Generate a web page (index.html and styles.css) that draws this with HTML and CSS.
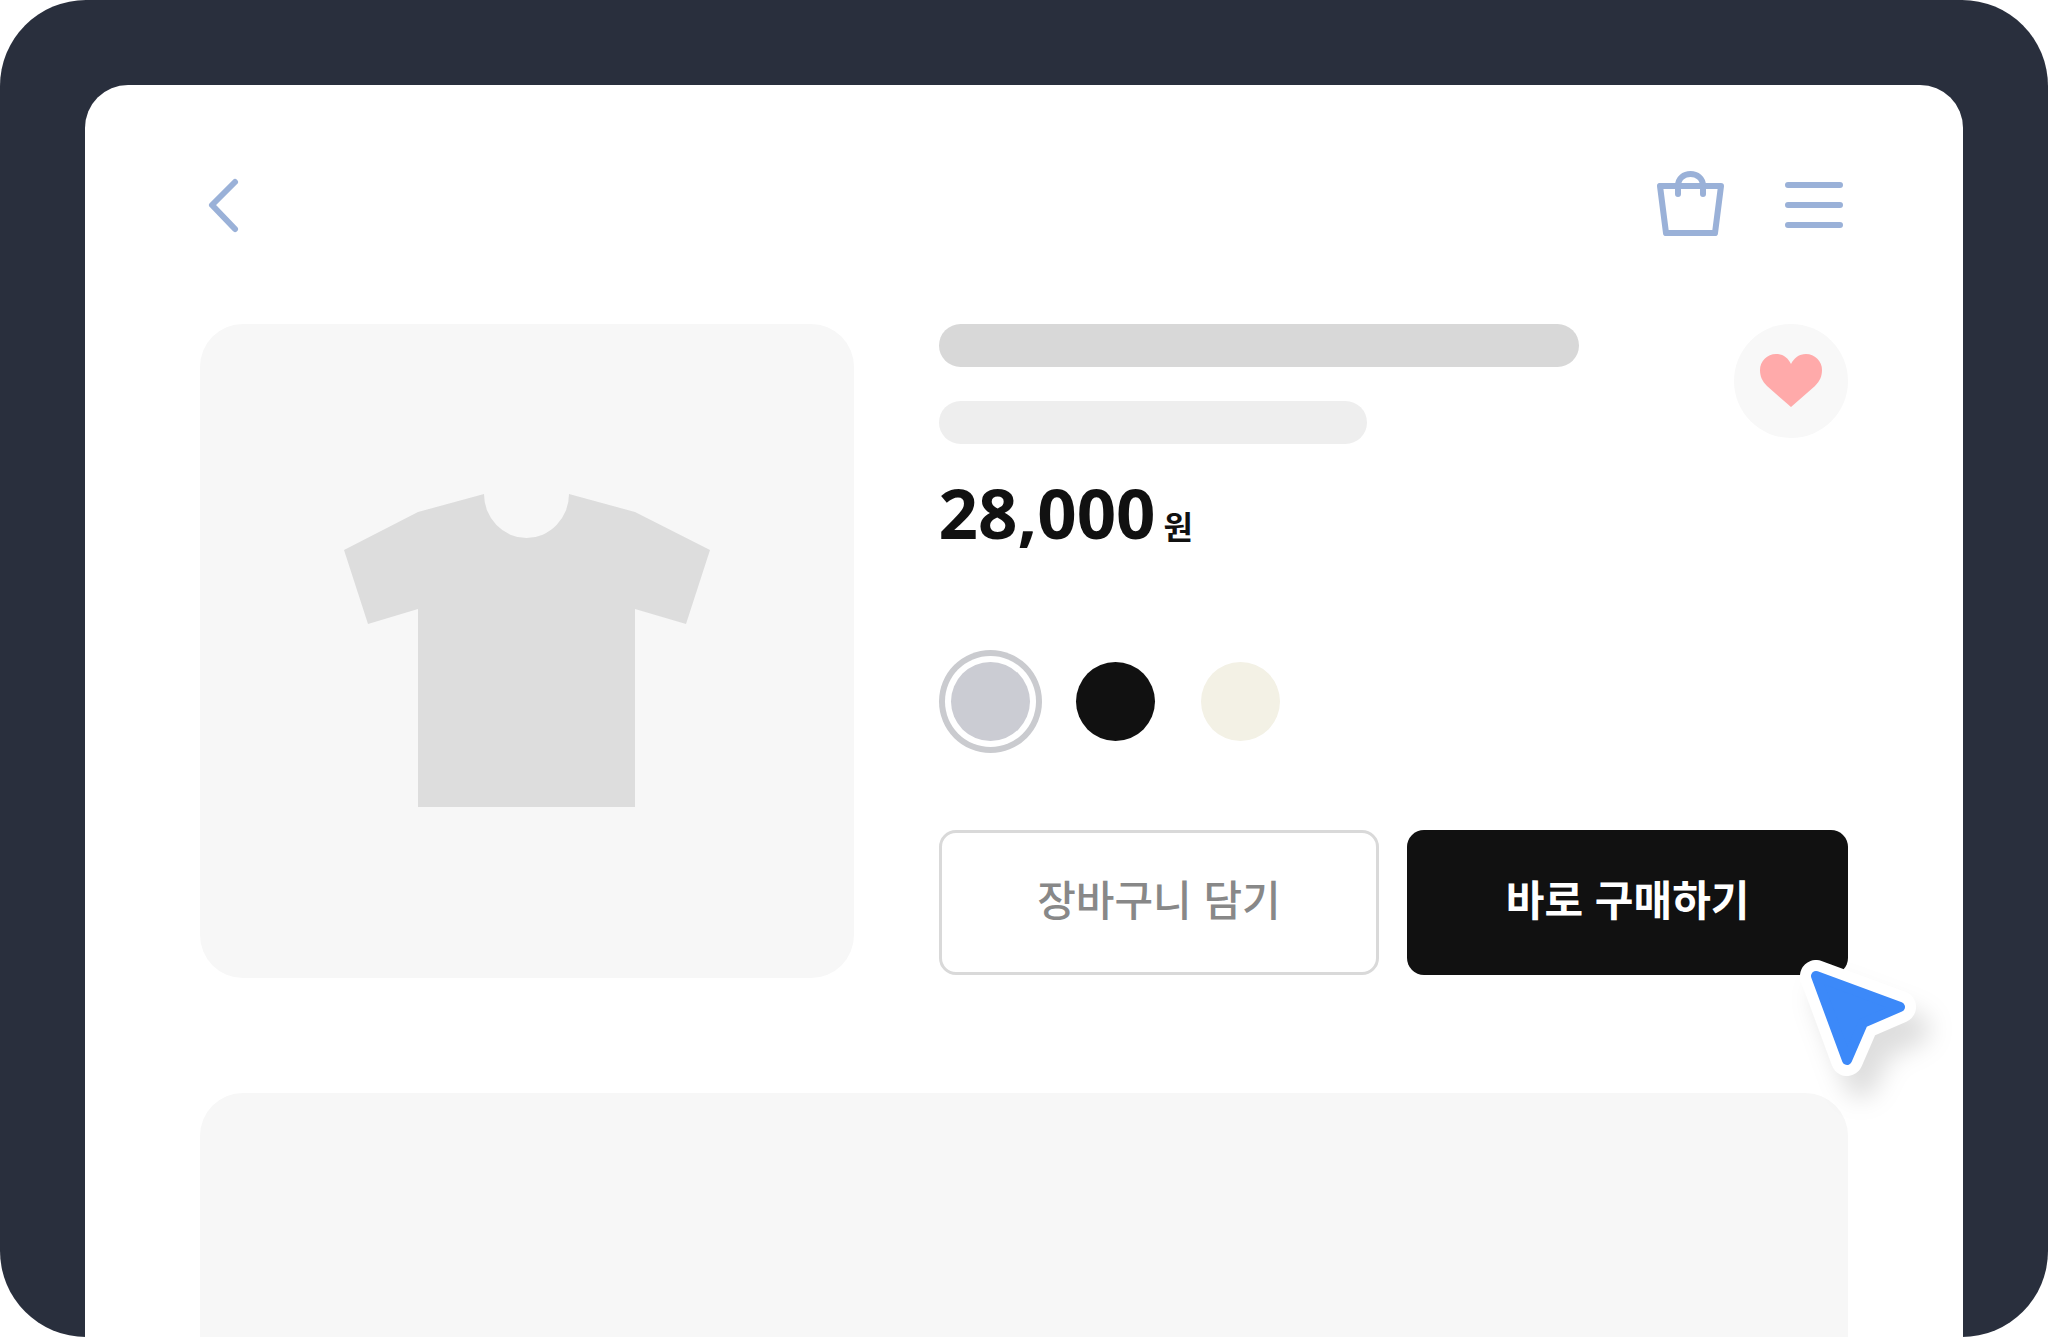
FILE: index.html
```html
<!DOCTYPE html>
<html lang="ko">
<head>
    <meta charset="UTF-8">
    <meta name="viewport" content="width=device-width, initial-scale=1.0">
    <title>상품 상세</title>
    <link rel="stylesheet" href="styles.css">
</head>
<body>
    <div class="device">
        <main class="screen">
            <header class="topbar">
                <button type="button" class="icon-button" aria-label="뒤로">
                    <svg width="48" height="70" viewBox="0 0 48 70">
                        <path d="M35 12 L12 35 L35 59" />
                    </svg>
                </button>
                <div class="topbar-actions">
                    <button type="button" class="icon-button" aria-label="장바구니">
                        <svg width="70" height="70" viewBox="0 0 70 70">
                            <path d="M4 16 H65 L59 63 H10 Z" />
                            <path d="M22 24 V16 C22 0 47 0 47 16 V24" />
                        </svg>
                    </button>
                    <button type="button" class="icon-button" aria-label="메뉴">
                        <svg width="70" height="70" viewBox="0 0 70 70">
                            <path d="M10 15 H62 M10 35 H62 M10 55 H62" />
                        </svg>
                    </button>
                </div>
            </header>

            <section class="product">
                <div class="product-image">
                    <svg class="shirt" viewBox="0 0 366 314" aria-hidden="true">
                        <path d="M0 56 L74 18 L140 0 A42.5 44 0 0 0 225 0 L291 18 L366 56 L342 130 L291 115 V313 H74 V115 L24 130 Z" />
                    </svg>
                </div>

                <div class="details">
                    <div class="summary">
                        <div class="title-lines">
                            <div class="line line-title"></div>
                            <div class="line line-subtitle"></div>
                        </div>
                        <button type="button" class="like-button" aria-label="찜하기">
                            <svg width="62" height="54" viewBox="0 0 62 54">
                                <path d="M31 53 L7 32 C2 27 0 22 0 16 A16 16 0 0 1 16 0 C23 0 28 4 31 10 C34 4 39 0 46 0 A16 16 0 0 1 62 16 C62 22 60 27 55 32 Z" />
                            </svg>
                        </button>
                    </div>

                    <p class="price">28,000<span class="won">원</span></p>

                    <div class="colors" role="radiogroup" aria-label="색상">
                        <input type="radio" name="color" class="swatch swatch-gray" aria-label="그레이" checked>
                        <input type="radio" name="color" class="swatch swatch-black" aria-label="블랙">
                        <input type="radio" name="color" class="swatch swatch-ivory" aria-label="아이보리">
                    </div>

                    <div class="buttons">
                        <button type="button" class="btn btn-cart">장바구니 담기</button>
                        <button type="button" class="btn btn-buy">바로 구매하기</button>
                        <svg class="cursor" width="160" height="170" viewBox="0 0 160 170" aria-hidden="true">
                            <path class="cursor-outline" d="M27 27 L111 58 L74 74 L58 111 Z" />
                            <path class="cursor-arrow" d="M27 27 L111 58 L74 74 L58 111 Z" />
                        </svg>
                    </div>
                </div>
            </section>

            <section class="description"></section>
        </main>
    </div>
</body>
</html>
```
FILE: styles.css
```css
* {
    box-sizing: border-box;
}
body {
    margin: 0;
    background-color: #fff;
    color: #111;
    font-family: "Noto Sans", "Noto Sans CJK KR", sans-serif;
}
button {
    padding: 0;
    border: none;
    background: none;
    font-family: "Noto Sans CJK KR", sans-serif;
    cursor: pointer;
}
svg {
    display: block;
}

/* device frame */
.device {
    display: flex;
    min-height: 100vh;
    padding: 85px 85px 0;
    border-radius: 86px;
    background-color: #292f3d;
}
.screen {
    flex: 1;
    display: flex;
    flex-direction: column;
    padding: 85px 115px 0;
    border-radius: 43px 43px 0 0;
    background-color: #fff;
}

/* top bar */
.topbar {
    display: flex;
    justify-content: space-between;
    align-items: center;
    margin-bottom: 84px;
}
.topbar-actions {
    display: flex;
    gap: 52px;
}
.icon-button svg {
    fill: none;
    stroke: #9ab1d8;
    stroke-width: 6;
    stroke-linecap: round;
    stroke-linejoin: round;
}

/* product */
.product {
    display: grid;
    grid-template-columns: 654fr 910fr;
    gap: 85px;
    align-items: start;
}
.product-image {
    display: flex;
    justify-content: center;
    align-items: center;
    aspect-ratio: 1;
    border-radius: 43px;
    background-color: #f7f7f7;
}
.shirt {
    width: 56%;
    fill: #ddd;
}
.summary {
    display: flex;
    justify-content: space-between;
    align-items: flex-start;
}
.title-lines {
    flex: 1;
    display: flex;
    flex-direction: column;
    gap: 34px;
    max-width: 640px;
}
.line {
    height: 43px;
    border-radius: 22px;
}
.line-title {
    background-color: #d8d8d8;
}
.line-subtitle {
    width: 67%;
    background-color: #eee;
}
.like-button {
    display: flex;
    justify-content: center;
    align-items: center;
    width: 114px;
    height: 114px;
    border-radius: 50%;
    background-color: #f8f8f8;
}
.like-button svg {
    fill: #faa;
}
.price {
    margin: 34px 0 104px;
    font-size: 69px;
    font-weight: 700;
    line-height: 68px;
}
.won {
    margin-left: 8px;
    font-family: "Noto Sans CJK KR", sans-serif;
    font-size: 32px;
    line-height: 32px;
}

/* color options */
.colors {
    display: flex;
    gap: 46px;
    padding: 12px;
    margin-bottom: 77px;
}
.swatch {
    appearance: none;
    width: 79px;
    height: 79px;
    margin: 0;
    border-radius: 50%;
    cursor: pointer;
}
.swatch:checked {
    box-shadow: 0 0 0 6px #fff, 0 0 0 12px #cacbcf;
}
.swatch-gray {
    background-color: #cbccd3;
}
.swatch-black {
    background-color: #111;
}
.swatch-ivory {
    background-color: #f3f1e5;
}

/* buttons */
.buttons {
    position: relative;
    display: grid;
    grid-template-columns: 1fr 1fr;
    gap: 28px;
}
.btn {
    height: 145px;
    padding-bottom: 10px;
    border-radius: 17px;
    font-size: 42px;
}
.btn-cart {
    border: 3px solid #d9d9d9;
    background-color: #fff;
    color: #888;
    font-weight: 500;
}
.btn-buy {
    background-color: #111;
    color: #fff;
    font-weight: 700;
}
.cursor {
    position: absolute;
    right: -101px;
    bottom: -144px;
    overflow: visible;
    stroke-linejoin: round;
    filter: drop-shadow(14px 22px 12px rgba(0, 0, 0, 0.13));
    pointer-events: none;
}
.cursor-outline {
    fill: #fff;
    stroke: #fff;
    stroke-width: 32;
}
.cursor-arrow {
    fill: #3c89f9;
    stroke: #3c89f9;
    stroke-width: 10;
}

/* description area */
.description {
    flex: 1;
    min-height: 244px;
    margin-top: 115px;
    border-radius: 43px 43px 0 0;
    background-color: #f7f7f7;
}
```
